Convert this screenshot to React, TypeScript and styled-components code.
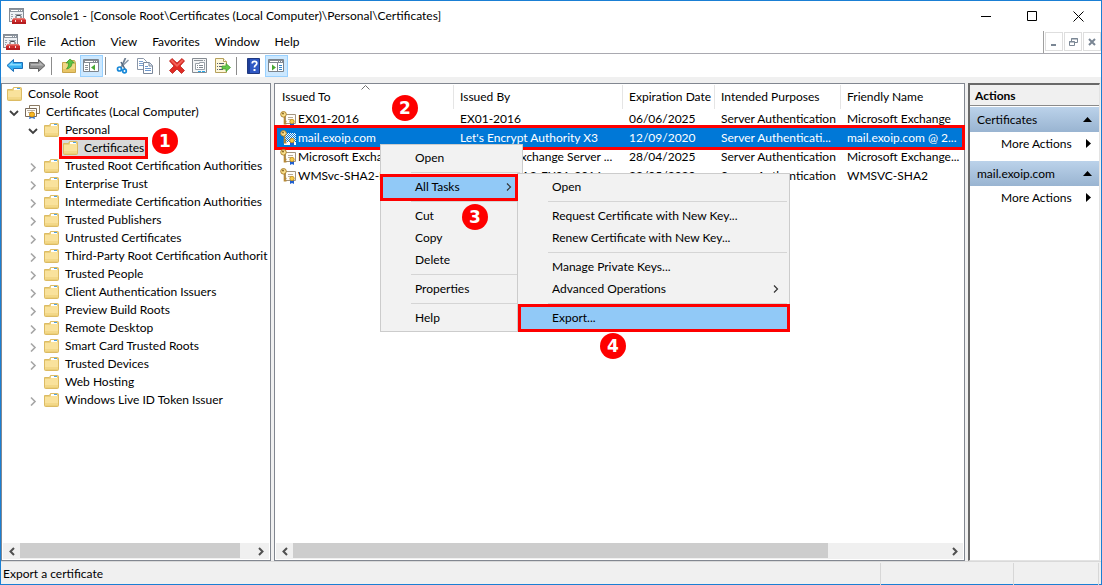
import React from "react";
import styled, { createGlobalStyle, css } from "styled-components";

const Global = createGlobalStyle`
  *, *::before, *::after { box-sizing: border-box; }
  body { margin: 0; background: #f0f0f0; }
  body, button { font-family: Lato, "Open Sans", sans-serif; font-size: 12px; color: #000; }
  button { margin: 0; padding: 0; border: 0; background: none; text-align: left; }
  svg { display: block; flex: none; }
`;

/* ---------- window frame ---------- */

const Window = styled.div`
  position: relative;
  display: flex;
  flex-direction: column;
  min-height: 100vh;
  border: 1px solid #1a7fd4;
  background: #f0f0f0;
`;

const TitleBar = styled.header`
  display: flex;
  align-items: center;
  height: 30px;
  padding-left: 8px;
  gap: 4px;
  background: #fff;
`;

const Title = styled.h1`
  flex: 1;
  margin: 0;
  padding-bottom: 2px;
  font-size: 12px;
  font-weight: 400;
  white-space: nowrap;
`;

const CaptionButton = styled.button`
  display: grid;
  place-items: center;
  width: 46px;
  height: 30px;
`;

const Captions = styled.div`
  display: flex;
`;

const MenuBar = styled.nav`
  display: flex;
  align-items: center;
  height: 23px;
  padding-left: 2px;
  gap: 7px;
  border-bottom: 1px solid #a9a9b0;
  background: #fff;
`;

const MenuBarItems = styled.div`
  display: flex;
  flex: 1;
  gap: 15px;
`;

const MenuBarButton = styled.button`
  height: 20px;
  padding-bottom: 2px;
`;

const ChildControls = styled.div`
  display: flex;
  align-self: stretch;
  gap: 1px;
  padding: 1px 0 0 1px;
  border-left: 1px solid #a0a0a0;
`;

const ChildButton = styled.button`
  display: grid;
  place-items: center;
  width: 18px;
  height: 19px;
  border: 1px solid #dedede;
`;

const Toolbar = styled.div`
  display: flex;
  align-items: center;
  height: 23px;
  padding-left: 2px;
  background: #fff;
`;

const ToolButton = styled.button<{ $on?: boolean }>`
  display: grid;
  place-items: center;
  width: 23px;
  height: 22px;
  ${(p) => p.$on && css`background: #cce8ff; border: 1px solid #99d1ff;`}
`;

const ToolDivider = styled.span`
  width: 1px;
  height: 18px;
  margin: 0 5px 0 2px;
  background: #8c8c8c;
`;

/* ---------- panes ---------- */

const Body = styled.main`
  display: grid;
  flex: 1;
  grid-template-columns: 270px minmax(0, 1fr) 132px;
  gap: 3px;
  padding: 6px 1px 0 0;
`;

const Pane = styled.section`
  display: flex;
  flex-direction: column;
  min-width: 0;
  padding: 1px;
  border: 1px solid #828790;
  background: #fff;
`;

const PaneContent = styled.div`
  flex: 1;
  min-width: 0;
`;

const ScrollBar = styled.div`
  display: flex;
  height: 16px;
  background: #f0f0f0;
`;

const ScrollButton = styled.button`
  display: grid;
  place-items: center;
  width: 17px;
  height: 16px;
`;

const ScrollTrack = styled.div`
  flex: 1;
`;

const ScrollThumb = styled.div<{ $share: number }>`
  width: ${(p) => p.$share}%;
  height: 15px;
  background: #cdcdcd;
`;

/* ---------- tree ---------- */

const TreeList = styled.ul`
  margin: 0;
  padding: 0;
  list-style: none;
`;

const TreeRow = styled.li<{ $level: number }>`
  display: flex;
  align-items: center;
  height: 18px;
  padding-left: ${(p) => (p.$level ? p.$level * 19 - 16 : 3)}px;
  overflow: ${(p) => (p.$level === 3 ? "visible" : "hidden")};
  white-space: nowrap;
`;

const Twisty = styled.button`
  display: grid;
  flex: none;
  justify-content: start;
  align-items: center;
  width: 18px;
  height: 18px;
  padding: 2px 0 0 3px;
`;

const NodeLabel = styled.span<{ $selected?: boolean; $wide?: boolean }>`
  position: relative;
  display: flex;
  flex: none;
  align-items: center;
  gap: ${(p) => (p.$wide ? 5 : 6)}px;
  height: 18px;
  padding: 0 1px;
  ${(p) => p.$selected && css`background: #d9d9d9;`}
`;

const NodeText = styled.span`
  padding-bottom: 2px;
`;

/* ---------- annotations ---------- */

const Highlight = styled.span`
  position: absolute;
  inset: -3px;
  border: 3px solid #fe0000;
  pointer-events: none;
`;

const NodeHighlight = styled(Highlight)`
  inset: -2px -3px;
`;

const RowHighlight = styled(Highlight)`
  inset: -3px -2px;
`;

const Step = styled.span<{ $x: number; $y: number }>`
  position: absolute;
  left: ${(p) => p.$x}px;
  top: ${(p) => p.$y}px;
  z-index: 5;
  display: grid;
  place-items: center;
  width: 26px;
  height: 26px;
  border-radius: 50%;
  background: #fe0000;
  color: #fff;
  font: 700 17px/26px "DejaVu Sans", sans-serif;
`;

/* ---------- certificate list ---------- */

const Table = styled.table`
  width: 100%;
  border-collapse: separate;
  border-spacing: 0;
  table-layout: fixed;
`;

const Head = styled.th`
  position: relative;
  height: 24px;
  padding: 0 0 2px 6px;
  border-right: 1px solid #e5e5e5;
  font-weight: 400;
  text-align: left;
  white-space: nowrap;
  &:last-child { border-right: 0; }
`;

const SortMark = styled.svg`
  position: absolute;
  left: calc(50% - 4px);
  top: 0;
`;

const Cell = styled.td`
  height: 19px;
  padding: 0 2px 0 6px;
  overflow: hidden;
  line-height: 19px;
  text-overflow: ellipsis;
  white-space: nowrap;
  &:first-child { padding-left: 4px; }
`;

const CertRow = styled.tr<{ $selected?: boolean }>`
  position: relative;
  ${(p) => p.$selected && css`background: #0078d7; color: #fff;`}
`;

const NameCell = styled.span`
  display: flex;
  align-items: center;
  gap: 2px;
`;

/* ---------- actions ---------- */

const ActionsPane = styled.aside`
  display: flex;
  flex-direction: column;
  border: solid #696969;
  border-width: 2px 1px 1px 2px;
  border-right-color: #e3e3e3;
  border-bottom-color: #e3e3e3;
  background: #fff;
`;

const ActionsTitle = styled.h2`
  margin: 0 0 1px;
  height: 21px;
  padding-left: 5px;
  border-bottom: 1px solid #8a8a8a;
  background: #f0f0f0;
  font-size: 12px;
  font-weight: 700;
  line-height: 21px;
`;

const ActionGroup = styled.button`
  display: flex;
  align-items: center;
  justify-content: space-between;
  height: 25px;
  padding: 0 7px;
  background: linear-gradient(#bbd2ea, #99b4d1);
`;

const ActionItem = styled.button`
  display: flex;
  align-items: center;
  justify-content: space-between;
  height: 25px;
  margin-bottom: 4px;
  padding: 0 6px 2px 31px;
`;

/* ---------- context menus ---------- */

const Menu = styled.ul`
  position: absolute;
  z-index: 3;
  margin: 0;
  padding: 2px;
  border: 1px solid #ccc;
  background: #f2f2f2;
  list-style: none;
`;

const ContextMenu = styled(Menu)`
  left: 379px;
  top: 143px;
  width: 143px;
`;

const SubMenu = styled(Menu)`
  left: 134px;
  top: -3px;
  width: 273px;
`;

const MenuItem = styled.li<{ $active?: boolean }>`
  position: relative;
  background: ${(p) => (p.$active ? "#91c9f7" : "transparent")};
`;

const MenuButton = styled.button`
  display: block;
  width: 100%;
  height: 22px;
  padding: 0 12px 2px 32px;
`;

const SubmenuMark = styled.span`
  position: absolute;
  right: 8px;
  top: 7px;
`;

const MenuRule = styled.li`
  height: 7px;
  padding: 3px 0;
  &::before { content: ""; display: block; height: 1px; margin-left: 28px; background: #d5d5d5; }
`;

const ItemHighlight = styled(Highlight)<{ $nested?: boolean }>`
  z-index: 4;
  ${(p) => (p.$nested ? css`left: -2px;` : css`right: 2px; top: -2px;`)}
`;

/* ---------- status bar ---------- */

const StatusBar = styled.footer`
  display: grid;
  grid-template-columns: minmax(0, 1fr) 133px 85px;
  height: 23px;
  padding: 1px 2px 1px 0;
  border-top: 1px solid #d9d9d9;
`;

const StatusCell = styled.span`
  padding-left: 2px;
  border-right: 1px solid #d7d7d7;
  line-height: 22px;
`;

/* ---------- icons ---------- */

const ConsoleIcon = () => (
  <svg width="17" height="17" viewBox="0 0 17 17" aria-hidden="true">
    <rect x="0.5" y="0.5" width="14" height="13" fill="#eef1f5" stroke="#848b94" />
    <path d="M1 1h13v3H1z" fill="#8d959f" />
    <path d="M2 2h7v1H2z" fill="#fff" />
    <path d="M10 2h1v1h-1zM12 2h1v1h-1z" fill="#fff" />
    <path d="M2 6h2v1H2zM2 8h2v1H2zM2 10h1v1H2zM6 6h7v1H6z" fill="#9aa2ac" />
    <path d="M7 10V8.500Q7 7.500 8 7.500h3q1 0 1 1V10" fill="none" stroke="#4b4b50" />
    <path d="M5 10h10l2 2v4H3v-4z" fill="#cf2b2b" />
    <path d="M5 10h10l1.500 1.500h-13z" fill="#e8776e" />
    <path d="M3 14h14v2H3z" fill="#b31d20" />
    <path d="M6 12h1v2H6zM12 12h1v2h-1z" fill="#f2e4e4" />
  </svg>
);

const Folder = () => (
  <svg width="15" height="14" viewBox="0 0 15 14" aria-hidden="true">
    <path d="M0.500 2.500h5l1-2h7q1 0 1 1v11q0 1-1 1h-12q-1 0-1-1z" fill="#ecd07a" stroke="#dcbb63" />
    <path d="M7 1h6v2H7z" fill="#fff" />
    <path d="M10 1h3v1h-3z" fill="#4fa3e0" />
    <path d="M1 4h5l1-1h7v9H1z" fill="#f9e29c" />
    <path d="M1 10h13v2H1z" fill="#f3d888" />
  </svg>
);

const CertStore = () => (
  <svg width="16" height="15" viewBox="0 0 16 15" aria-hidden="true">
    <path d="M4.500 0.500h10v8h-10z" fill="#fffdf7" stroke="#8b7a63" />
    <path d="M0.500 3.500h11v8H.5z" fill="#fffdf7" stroke="#77695a" />
    <path d="M2 5h8v1H2zM3 7h5v1H3z" fill="#b9aea0" />
    <path d="M5 10l-1 4 3-1 3 1-1-4z" fill="#2b6fd0" />
    <circle cx="7" cy="9.500" r="2.500" fill="#f7b924" stroke="#c98610" />
  </svg>
);

const CertIcon = ({ selected }: { selected?: boolean }) => (
  <svg width="16" height="16" viewBox="0 0 16 16" aria-hidden="true">
    {selected && (
      <defs>
        <pattern id="dither" width="2" height="2" patternUnits="userSpaceOnUse">
          <path d="M0 0h1v1H0zM1 1h1v1H1z" fill="#0078d7" />
        </pattern>
      </defs>
    )}
    <path d={selected ? "M4 3h12v12H4z" : "M5.500 3.500h10v9h-10z"} fill="#fffdf8" stroke={selected ? "none" : "#a3947e"} />
    {!selected && <path d="M8 6h5v1H8zM8 8h3v1H8z" fill="#b7ab9a" />}
    {selected && <path d="M4 3h12v9H4z" fill="url(#dither)" />}
    <path d="M10 12v4l2-1 2 1v-4z" fill="#1f5fd0" />
    <circle cx="12" cy="10.500" r="2.200" fill="#f6cb4a" stroke="#c28a16" strokeWidth=".8" />
    <path d="M4.500 5v8.500M4.500 10.500h2M4.500 12.800h2" fill="none" stroke="#b98a35" strokeWidth="1.600" />
    <circle cx="3.500" cy="3.300" r="2.800" fill="#f9e08c" stroke="#a87a26" strokeWidth=".9" />
    <circle cx="3" cy="2.500" r=".9" fill="#7c5a1c" />
  </svg>
);

const Chevron = ({ open }: { open: boolean }) => (
  <svg width="10" height="10" viewBox="0 0 10 10" fill="none" aria-hidden="true">
    {open ? (
      <path d="M1 3l4 4 4-4" stroke="#404040" strokeWidth="1.800" />
    ) : (
      <path d="M3 1.500l4 4-4 4" stroke="#a6a6a6" strokeWidth="1.600" />
    )}
  </svg>
);

const ScrollArrow = ({ back }: { back?: boolean }) => (
  <svg width="8" height="9" viewBox="0 0 8 9" fill="none" aria-hidden="true">
    <path d={back ? "M6 1L2.500 4.500 6 8" : "M2 1l3.500 3.500L2 8"} stroke="#505050" strokeWidth="2" />
  </svg>
);

const MenuArrow = () => (
  <svg width="6" height="8" viewBox="0 0 6 8" fill="none" aria-hidden="true">
    <path d="M1 0.500L4.500 4 1 7.500" stroke="#333" strokeWidth="1.200" />
  </svg>
);

const Arrow = ({ forward }: { forward?: boolean }) => (
  <svg width="17" height="15" viewBox="0 0 17 15" aria-hidden="true">
    <path
      d={forward ? "M16 7.500L9.500 1.500v3H.5v6h9v3z" : "M1 7.500L7.500 1.500v3h9v6h-9v3z"}
      fill={forward ? "#8f8f8f" : "#35b0f2"}
      stroke={forward ? "#626262" : "#1c6fb8"}
    />
    <path
      d={forward ? "M2 6h8.500V4l4 3.500H2z" : "M15 6H6.500V4l-4 3.500H15z"}
      fill={forward ? "#b9b9b9" : "#8bdcff"}
    />
  </svg>
);

const FolderUp = () => (
  <svg width="16" height="16" viewBox="0 0 16 16" aria-hidden="true">
    <path d="M1.500 4.500h5l1-2h6l1 2v10h-13z" fill="#f2d887" stroke="#c9a44a" />
    <path d="M2 11h12v3H2z" fill="#e8c566" />
    <path d="M9 1l4.500 4H11q0 5-5.500 6Q8 8.500 7.500 5H5z" fill="#5cc243" stroke="#3a9427" strokeWidth=".7" />
  </svg>
);

const PaneIcon = ({ right }: { right?: boolean }) => (
  <svg width="17" height="14" viewBox="0 0 17 14" aria-hidden="true">
    <path d="M0.500 0.500h15v12H.5z" fill="#fff" stroke="#7d848c" />
    <path d="M1 1h14v3H1z" fill="#858c95" />
    <path d="M2 2h8v1H2zM11 2h1v1h-1zM13 2h1v1h-1z" fill="#fff" />
    {right ? (
      <>
        <path d="M9 4h1v8H9z" fill="#7d848c" />
        <path d="M4 5.500v6L8 8.500z" fill="#47a833" />
        <path d="M11 6h3v1h-3zM11 8h3v1h-3zM11 10h3v1h-3z" fill="#3986c8" />
      </>
    ) : (
      <>
        <path d="M6 4h1v8H6z" fill="#7d848c" />
        <path d="M2 6h3v1H2zM2 8h3v1H2zM2 10h3v1H2z" fill="#8a9199" />
        <path d="M12 5.500v6L8 8.500z" fill="#47a833" />
      </>
    )}
  </svg>
);

const Cut = () => (
  <svg width="14" height="16" viewBox="0 0 14 16" fill="none" aria-hidden="true">
    <path d="M9.500 0L5 10" stroke="#6f7f92" strokeWidth="1.800" />
    <path d="M12.500 2L4 10" stroke="#8a99aa" strokeWidth="1.500" />
    <path d="M5 4l4 7" stroke="#52677e" strokeWidth="1.500" />
    <circle cx="3.500" cy="11" r="2" stroke="#1788d8" strokeWidth="1.700" />
    <circle cx="8.500" cy="13" r="1.800" stroke="#1788d8" strokeWidth="1.700" />
  </svg>
);

const Copy = () => (
  <svg width="17" height="16" viewBox="0 0 17 16" aria-hidden="true">
    <path d="M0.500 0.500h6l3 3v8h-9z" fill="#fff" stroke="#8a96a8" />
    <path d="M2 3h4v1H2zM2 5h4v1H2zM2 7h4v1H2z" fill="#7aa0d0" />
    <path d="M6.500 4.500h6l3 3v8h-9z" fill="#fff" stroke="#7b889b" />
    <path d="M12 4.500V8h3.500" fill="#dbe5f2" stroke="#7b889b" />
    <path d="M8 8h3v1H8zM8 10h6v1H8zM8 12h6v1H8z" fill="#6d98cd" />
  </svg>
);

const Remove = () => (
  <svg width="16" height="16" viewBox="0 0 16 16" aria-hidden="true">
    <path d="M3 0.500L8 5l5-4.500L15.500 3 11 8l4.500 4.500-3 3L8 11l-4.500 4.500-3-3L5 8 .5 3z" fill="#e02b24" stroke="#b9211c" strokeWidth=".8" />
    <path d="M3 1.500L8 6.500l5-5 1.500 1.300L8 9 1.500 2.800z" fill="#f2635a" />
  </svg>
);

const Properties = () => (
  <svg width="16" height="16" viewBox="0 0 16 16" aria-hidden="true">
    <path d="M0.500 0.500h14v14H.5z" fill="#f3f4f5" stroke="#858b92" />
    <path d="M2 2h9v1H2zM12 2h1v1h-1z" fill="#8d949b" />
    <path d="M3.500 5.500h4v-1h5v7h-9z" fill="#fff" stroke="#9aa1a8" />
    <path d="M5 7h1v1H5zM5 9h1v1H5zM7 7h4v1H7zM7 9h4v1H7z" fill="#7f878f" />
    <path d="M6 13h3v1H6zM10 13h3v1h-3z" fill="#22a7e8" />
  </svg>
);

const ExportList = () => (
  <svg width="16" height="16" viewBox="0 0 16 16" aria-hidden="true">
    <path d="M0.500 0.500h8l3 3v11h-11z" fill="#fdf6d8" stroke="#b5a05b" />
    <path d="M8.500 0.500v3h3" fill="#fff" stroke="#b5a05b" />
    <path d="M2 5h1v1H2zM4 5h5v1H4zM2 8h1v1H2zM4 8h4v1H4zM2 11h1v1H2zM4 11h4v1H4z" fill="#55606e" />
    <path d="M7 8h4V5.500l4.500 4-4.500 4V11H7z" fill="#63c84a" stroke="#3d9a2a" strokeWidth=".7" />
  </svg>
);

const Help = () => (
  <svg width="14" height="16" viewBox="0 0 14 16" aria-hidden="true">
    <path d="M0.500 0.500h12v15H.5z" fill="#2f58c4" stroke="#20397f" />
    <path d="M1 1h2v14H1z" fill="#1e3e9a" />
    <path d="M5.200 5.500Q5.200 3.300 7.500 3.300T9.800 5.300q0 1.200-1.200 2T7.500 9.500" fill="none" stroke="#fff" strokeWidth="1.700" />
    <path d="M6.500 11h2v2h-2z" fill="#fff" />
  </svg>
);

/* ---------- data ---------- */

type Node = { level: number; label: string; open?: boolean; leaf?: boolean; selected?: boolean; store?: boolean };

const nodes: Node[] = [
  { level: 0, label: "Console Root", leaf: true },
  { level: 1, label: "Certificates (Local Computer)", open: true, store: true },
  { level: 2, label: "Personal", open: true },
  { level: 3, label: "Certificates", leaf: true, selected: true },
  ...[
    "Trusted Root Certification Authorities",
    "Enterprise Trust",
    "Intermediate Certification Authorities",
    "Trusted Publishers",
    "Untrusted Certificates",
    "Third-Party Root Certification Authorit",
    "Trusted People",
    "Client Authentication Issuers",
    "Preview Build Roots",
    "Remote Desktop",
    "Smart Card Trusted Roots",
    "Trusted Devices",
  ].map((label) => ({ level: 2, label })),
  { level: 2, label: "Web Hosting", leaf: true },
  { level: 2, label: "Windows Live ID Token Issuer" },
];

const columns = ["Issued To", "Issued By", "Expiration Date", "Intended Purposes", "Friendly Name"];

const certificates = [
  ["EX01-2016", "EX01-2016", "06/06/2025", "Server Authentication", "Microsoft Exchange"],
  ["mail.exoip.com", "Let's Encrypt Authority X3", "12/09/2020", "Server Authenticati...", "mail.exoip.com @ 2..."],
  ["Microsoft Exchange", "Microsoft Exchange Server ...", "28/04/2025", "Server Authentication", "Microsoft Exchange..."],
  ["WMSvc-SHA2-EX01-2016", "WMSvc-SHA2-EX01-2016", "22/05/2030", "Server Authentication", "WMSVC-SHA2"],
];

const Scroll = ({ share }: { share: number }) => (
  <ScrollBar>
    <ScrollButton aria-label="Scroll left"><ScrollArrow back /></ScrollButton>
    <ScrollTrack><ScrollThumb $share={share} /></ScrollTrack>
    <ScrollButton aria-label="Scroll right"><ScrollArrow /></ScrollButton>
  </ScrollBar>
);

export default function App() {
  return (
    <>
      <Global />
      <Window>
        <TitleBar>
          <ConsoleIcon />
          <Title>Console1 - [Console Root\Certificates (Local Computer)\Personal\Certificates]</Title>
          <Captions>
            <CaptionButton aria-label="Minimize">
              <svg width="11" height="11"><path d="M0 5h10v1H0z" /></svg>
            </CaptionButton>
            <CaptionButton aria-label="Maximize">
              <svg width="11" height="11"><path d="M0.500 0.500h9v9h-9z" fill="none" stroke="#000" /></svg>
            </CaptionButton>
            <CaptionButton aria-label="Close">
              <svg width="11" height="11"><path d="M0.500 0.500l10 10M10.500 0.500l-10 10" stroke="#000" /></svg>
            </CaptionButton>
          </Captions>
        </TitleBar>

        <MenuBar>
          <ConsoleIcon />
          <MenuBarItems>
            {["File", "Action", "View", "Favorites", "Window", "Help"].map((m) => (
              <MenuBarButton key={m}>{m}</MenuBarButton>
            ))}
          </MenuBarItems>
          <ChildControls>
            <ChildButton aria-label="Minimize console">
              <svg width="8" height="8"><path d="M1 6h5v2H1z" fill="#7a8694" /></svg>
            </ChildButton>
            <ChildButton aria-label="Restore console">
              <svg width="9" height="8"><path d="M2.500 3V.5h6v4H6M0.500 3.500h5v4h-5zM2 1h7M0 4h6" fill="none" stroke="#7a8694" /></svg>
            </ChildButton>
            <ChildButton aria-label="Close console">
              <svg width="8" height="8"><path d="M1 1l6 6M7 1L1 7" stroke="#7a8694" strokeWidth="2" /></svg>
            </ChildButton>
          </ChildControls>
        </MenuBar>

        <Toolbar>
          <ToolButton aria-label="Back"><Arrow /></ToolButton>
          <ToolButton aria-label="Forward"><Arrow forward /></ToolButton>
          <ToolDivider />
          <ToolButton aria-label="Up one level"><FolderUp /></ToolButton>
          <ToolButton aria-label="Show/Hide Console Tree" $on><PaneIcon /></ToolButton>
          <ToolDivider />
          <ToolButton aria-label="Cut"><Cut /></ToolButton>
          <ToolButton aria-label="Copy"><Copy /></ToolButton>
          <ToolDivider />
          <ToolButton aria-label="Delete"><Remove /></ToolButton>
          <ToolButton aria-label="Properties"><Properties /></ToolButton>
          <ToolButton aria-label="Export List"><ExportList /></ToolButton>
          <ToolDivider />
          <ToolButton aria-label="Help"><Help /></ToolButton>
          <ToolButton aria-label="Show/Hide Action Pane" $on><PaneIcon right /></ToolButton>
        </Toolbar>

        <Body>
          <Pane>
            <PaneContent>
              <TreeList>
                {nodes.map((n) => (
                  <TreeRow key={n.level + n.label} $level={n.level}>
                    {n.level > 0 &&
                      (n.leaf ? (
                        <Twisty as="span" />
                      ) : (
                        <Twisty aria-label={n.open ? "Collapse" : "Expand"}><Chevron open={!!n.open} /></Twisty>
                      ))}
                    <NodeLabel $selected={n.selected} $wide={n.store}>
                      {n.store ? <CertStore /> : <Folder />}
                      <NodeText>{n.label}</NodeText>
                      {n.selected && <NodeHighlight />}
                    </NodeLabel>
                  </TreeRow>
                ))}
              </TreeList>
            </PaneContent>
            <Scroll share={95} />
          </Pane>

          <Pane>
            <PaneContent>
              <Table>
                <colgroup>
                  <col width="178" />
                  <col width="169" />
                  <col width="92" />
                  <col width="126" />
                  <col />
                </colgroup>
                <thead>
                  <tr>
                    {columns.map((c, i) => (
                      <Head key={c} scope="col">
                        {c}
                        {i === 0 && (
                          <SortMark width="9" height="5" viewBox="0 0 9 5">
                            <path d="M0.500 4.500l4-4 4 4" fill="none" stroke="#707070" />
                          </SortMark>
                        )}
                      </Head>
                    ))}
                  </tr>
                </thead>
                <tbody>
                  {certificates.map((row, r) => (
                    <CertRow key={row[0]} $selected={r === 1}>
                      {row.map((value, i) => (
                        <Cell key={i}>
                          {i === 0 ? (
                            <NameCell>
                              <CertIcon selected={r === 1} />
                              {value}
                              {r === 1 && <RowHighlight />}
                            </NameCell>
                          ) : (
                            value
                          )}
                        </Cell>
                      ))}
                    </CertRow>
                  ))}
                </tbody>
              </Table>
            </PaneContent>
            <Scroll share={82} />
          </Pane>

          <ActionsPane>
            <ActionsTitle>Actions</ActionsTitle>
            {["Certificates", "mail.exoip.com"].map((g) => (
              <React.Fragment key={g}>
                <ActionGroup>
                  {g}
                  <svg width="9" height="5"><path d="M0 5l4.500-5L9 5z" /></svg>
                </ActionGroup>
                <ActionItem>
                  More Actions
                  <svg width="9" height="9"><path d="M2 0l5 4.500L2 9z" /></svg>
                </ActionItem>
              </React.Fragment>
            ))}
          </ActionsPane>
        </Body>

        <StatusBar>
          <StatusCell>Export a certificate</StatusCell>
          <StatusCell />
          <StatusCell />
        </StatusBar>

        <ContextMenu>
          <MenuItem><MenuButton>Open</MenuButton></MenuItem>
          <MenuRule />
          <MenuItem $active>
            <MenuButton>All Tasks</MenuButton>
            <SubMenu>
              <MenuItem><MenuButton>Open</MenuButton></MenuItem>
              <MenuRule />
              <MenuItem><MenuButton>Request Certificate with New Key...</MenuButton></MenuItem>
              <MenuItem><MenuButton>Renew Certificate with New Key...</MenuButton></MenuItem>
              <MenuRule />
              <MenuItem><MenuButton>Manage Private Keys...</MenuButton></MenuItem>
              <MenuItem>
                <MenuButton>Advanced Operations</MenuButton>
                <SubmenuMark><MenuArrow /></SubmenuMark>
              </MenuItem>
              <MenuRule />
              <MenuItem $active>
                <MenuButton>Export...</MenuButton>
                <ItemHighlight $nested />
              </MenuItem>
            </SubMenu>
            <SubmenuMark><MenuArrow /></SubmenuMark>
            <ItemHighlight />
          </MenuItem>
          <MenuRule />
          <MenuItem><MenuButton>Cut</MenuButton></MenuItem>
          <MenuItem><MenuButton>Copy</MenuButton></MenuItem>
          <MenuItem><MenuButton>Delete</MenuButton></MenuItem>
          <MenuRule />
          <MenuItem><MenuButton>Properties</MenuButton></MenuItem>
          <MenuRule />
          <MenuItem><MenuButton>Help</MenuButton></MenuItem>
        </ContextMenu>

        <Step $x={151} $y={127}>1</Step>
        <Step $x={391} $y={94}>2</Step>
        <Step $x={461} $y={203}>3</Step>
        <Step $x={599} $y={332}>4</Step>
      </Window>
    </>
  );
}
